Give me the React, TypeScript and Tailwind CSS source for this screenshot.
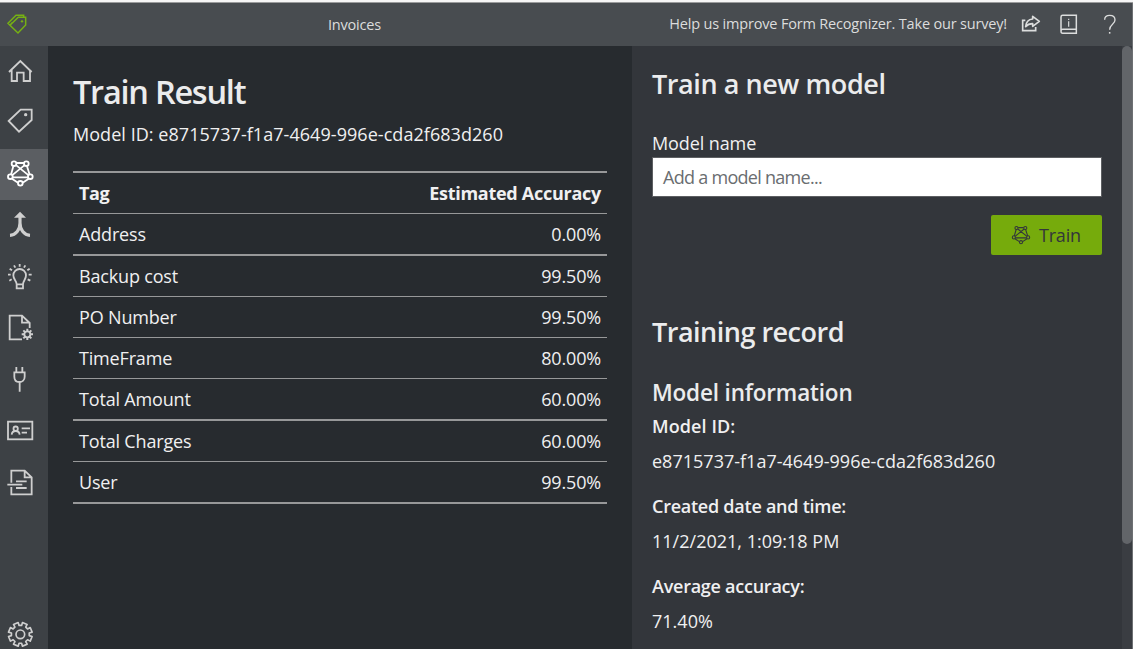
import type { ReactNode } from "react";

const sans = "font-['Open_Sans','Noto_Sans',sans-serif]";

function Glyph({ box, className, children, stroke = 5.4 }: { box: string; className: string; children: ReactNode; stroke?: number }) {
  return (
    <svg viewBox={box} className={`block shrink-0 ${className}`} fill="none" stroke="currentColor" strokeWidth={stroke}>
      {children}
    </svg>
  );
}

function Network({ r = 7 }: { r?: number }) {
  return (
    <>
      <path d="M49 54H72M40 64L33 89M81 64L89 89M49 61L86 91M73 61L36 91M38 97H84M36 101L54 113M86 101L68 113" />
      <circle cx="42" cy="56" r={r} />
      <circle cx="79" cy="56" r={r} />
      <circle cx="31" cy="95" r={r} />
      <circle cx="91" cy="95" r={r} />
      <circle cx="61" cy="115" r={r} />
    </>
  );
}

function gearPath(cx: number, cy: number, outer: number, inner: number) {
  const pts: string[] = [];
  for (let i = 0; i < 8; i++) {
    const a = (i * Math.PI) / 4 + Math.PI / 8;
    const at = (r: number, o: number) => `${(cx + r * Math.cos(a + o)).toFixed(1)} ${(cy + r * Math.sin(a + o)).toFixed(1)}`;
    pts.push(at(inner, -0.25), at(outer, -0.21), at(outer, 0.21), at(inner, 0.25));
  }
  return `M${pts.join("L")}Z`;
}

const nav: { name: string; box: string; size: string; active?: boolean; art: ReactNode }[] = [
  {
    name: "Home", box: "0 138 144 153", size: "h-[51px]",
    art: <path d="M27 216L61 183L95 216M35 209V243H51V218H71V243H90V209" />,
  },
  {
    name: "Tag editor", box: "0 291 144 156", size: "h-[52px]",
    art: <><path d="M26 363L62 329H95V360L57 395Z" /><circle cx="77" cy="344" r="5" fill="currentColor" stroke="none" /></>,
  },
  { name: "Train", box: "0 12 144 153", size: "h-[51px]", active: true, art: <Network /> },
  {
    name: "Compose", box: "0 165 144 156", size: "h-[52px]",
    art: <><path d="M60 210V234C60 254 48 270 30 271M60 234C60 254 72 270 90 271" strokeWidth="9.5" /><path d="M42 218L60 200L78 218Z" fill="currentColor" stroke="none" /></>,
  },
  {
    name: "Analyze", box: "0 321 144 153", size: "h-[51px]",
    art: (
      <>
        <path d="M50 418C50 407 40 404 40 391A19 19 0 0 1 78 391C78 404 69 407 69 418ZM50 418V430H69V418" />
        <path d="M59 357V365M42 361L46 368M76 361L72 368M29 371L36 376M89 371L82 376M24 389H32M86 389H95M28 407L35 403M91 407L83 403" />
      </>
    ),
  },
  {
    name: "Prebuilt", box: "0 39 144 156", size: "h-[52px]",
    art: (
      <>
        <path d="M66 148H29V77H66L89 99V114M66 77V98H89" />
        <circle cx="82" cy="133" r="9" />
        <path d="M82 116V124M82 142V150M65 133H73M91 133H99M70 121L76 127M88 139L94 145M94 121L88 127M76 139L70 145" strokeWidth="6" />
      </>
    ),
  },
  {
    name: "Connections", box: "0 195 144 153", size: "h-[51px]",
    art: <path d="M49 231V246M67 231V246M43 247H74V260C74 270 67 276 58 276S43 270 43 260ZM59 276V305" />,
  },
  {
    name: "Business card", box: "0 3 144 156", size: "h-[52px]",
    art: (
      <>
        <rect x="24" y="50" width="73" height="53" />
        <circle cx="47" cy="71" r="6.5" />
        <path d="M35 89C36 81 41 78 47 78S58 81 59 89M65 70H90M65 83H81" />
      </>
    ),
  },
  {
    name: "Layout", box: "0 159 144 153", size: "h-[51px]",
    art: <path d="M34 233V197H74L95 217V268H34V246M74 197V217H95M22 239H57M48 229H80M57 239H67M48 249H80" />,
  },
];

const rows = [
  ["Address", "0.00%", "border-b-2"],
  ["Backup cost", "99.50%", "border-b"],
  ["PO Number", "99.50%", "border-b"],
  ["TimeFrame", "80.00%", "border-b"],
  ["Total Amount", "60.00%", "border-b-2"],
  ["Total Charges", "60.00%", "border-b"],
  ["User", "99.50%", "border-b-2"],
];

const record = [
  ["Model ID:", "e8715737-f1a7-4649-996e-cda2f683d260", "tracking-[0.1px]"],
  ["Created date and time:", "11/2/2021, 1:09:18 PM", "tracking-[-0.25px]"],
  ["Average accuracy:", "71.40%", "tracking-[-0.25px]"],
];

export default function App() {
  return (
    <div className={`flex h-[649px] w-[1133px] flex-col overflow-hidden bg-[#272b2f] text-[18px] text-[#f0f0f1] ${sans}`}>
      <div className="h-[3px] shrink-0 border-b border-[#9b9c9d] bg-[#f6f6f6]" />
      <header className="flex h-[43px] shrink-0 items-center border-r border-[#6d7073] bg-[#484c50] text-[14.5px] text-[#dcdddd]">
        <Glyph box="0 9 144 129" className="h-[43px] w-12 text-[#76b014]" stroke={4.5}>
          <path d="M30 76L24 70L48 46H71V52M30 76L55 52H77V75L54 99ZM30 76L36 68" />
          <circle cx="66" cy="64" r="3.5" fill="currentColor" stroke="none" />
        </Glyph>
        <div className="w-[613px] text-center tracking-[-0.2px]">Invoices</div>
        <div className="w-[346px] pb-px text-right tracking-[-0.18px] whitespace-nowrap">Help us improve Form Recognizer. Take our survey!</div>
        <Glyph box="141 9 375 129" className="h-[43px] w-[125px]" stroke={5}>
          <path d="M196 61H188V92H227V81" />
          <path d="M218 49L238 64L218 79V71C208 71 202 74 197 80C198 67 206 58 218 57Z" strokeLinejoin="round" />
          <path d="M349 88H308Q303 88 303 94T308 100H349V46H308Q303 46 303 51V94" strokeWidth="4.5" />
          <path d="M326 64V80M326 56V60" strokeWidth="3.5" />
          <path d="M434 59C434 50 441 46 449 46C459 46 465 51 465 60C465 73 449 73 449 89" strokeWidth="4" />
          <path d="M449 96V101" strokeWidth="4.5" />
        </Glyph>
      </header>
      <div className="flex min-h-0 flex-1">
        <nav className="flex w-12 shrink-0 flex-col justify-between bg-[#3d4145] text-[#cfcfcf]">
          <div className="flex flex-col">
            {nav.map((n) => (
              <a key={n.name} aria-label={n.name} className={n.active ? "bg-[#5b5e62] text-white" : ""}>
                <Glyph box={n.box} className={`w-12 ${n.size}`}>{n.art}</Glyph>
              </a>
            ))}
          </div>
          <Glyph box="0 54 144 123" className="h-[41px] w-12 text-[#cfcfcf]" stroke={5}>
            <path d={gearPath(61, 133, 36, 27)} strokeLinejoin="round" />
            <circle cx="61" cy="133" r="13" />
          </Glyph>
        </nav>
        <main className="w-[584px] shrink-0 pl-[25px] pr-[25px] pt-[26px]">
          <h1 className="h-10 text-[32.5px] leading-10 font-semibold tracking-[-1.25px] text-[#ebeced]">Train Result</h1>
          <p className="mt-[8px] h-7 leading-7 tracking-[0.05px] whitespace-nowrap">Model ID: e8715737-f1a7-4649-996e-cda2f683d260</p>
          <div className="mt-[23px] w-[534px]">
            <div className="flex h-[43px] items-center justify-between border-t-2 border-b border-[#979899] px-1.5 font-bold">
              <span className="tracking-[-0.4px]">Tag</span>
              <span className="tracking-[-0.27px]">Estimated Accuracy</span>
            </div>
            {rows.map(([tag, value, line]) => (
              <div key={tag} className={`box-content flex h-10 items-center justify-between border-[#979899] px-1.5 tracking-[-0.17px] ${line} w-[522px]`}>
                <span>{tag}</span>
                <span>{value}</span>
              </div>
            ))}
          </div>
        </main>
        <aside className="w-[490px] shrink-0 bg-[#33363b] pl-5 pr-5 pt-[20px]">
          <h2 className="h-9 text-[27px] leading-9 font-semibold tracking-[-0.43px] text-[#ebeced]">Train a new model</h2>
          <div className="mt-[27px] h-7 leading-7 tracking-[-0.1px]">Model name</div>
          <div className="flex h-10 w-[450px] items-center border border-[#5d5f62] bg-white pl-[10px] tracking-[-0.72px] text-[#6a6d70]">Add a model name...</div>
          <div className="mt-[18px] flex justify-end">
            <button className="flex h-10 w-[111px] items-center rounded-[2px] bg-[#76ab0c] text-[#33363b]">
              <Glyph box="19 43 84 84" className="ml-5 h-5 w-5" stroke={4.5}><Network r={6.5} /></Glyph>
              <span className="ml-2 tracking-[-0.2px]">Train</span>
            </button>
          </div>
          <h2 className="mt-[59px] h-9 text-[27px] leading-9 font-semibold tracking-[-0.5px] text-[#ebeced]">Training record</h2>
          <h3 className="mt-[29px] h-7 text-[22.5px] leading-7 font-semibold tracking-[-0.17px] text-[#ebeced]">Model information</h3>
          <dl className="mt-[5px]">
            {record.map(([k, v, spacing]) => (
              <div key={k} className="h-20">
                <dt className={`h-7 leading-7 font-semibold ${spacing}`}>{k}</dt>
                <dd className="mt-[7px] h-7 leading-7 tracking-[0.01px] whitespace-nowrap">{v}</dd>
              </div>
            ))}
          </dl>
        </aside>
        <div className="w-[11px] shrink-0 border-r border-[#6d7073] bg-[#3a3d42]">
          <div className="h-[498px] w-[10px] rounded-full bg-[#626569]" />
        </div>
      </div>
    </div>
  );
}
